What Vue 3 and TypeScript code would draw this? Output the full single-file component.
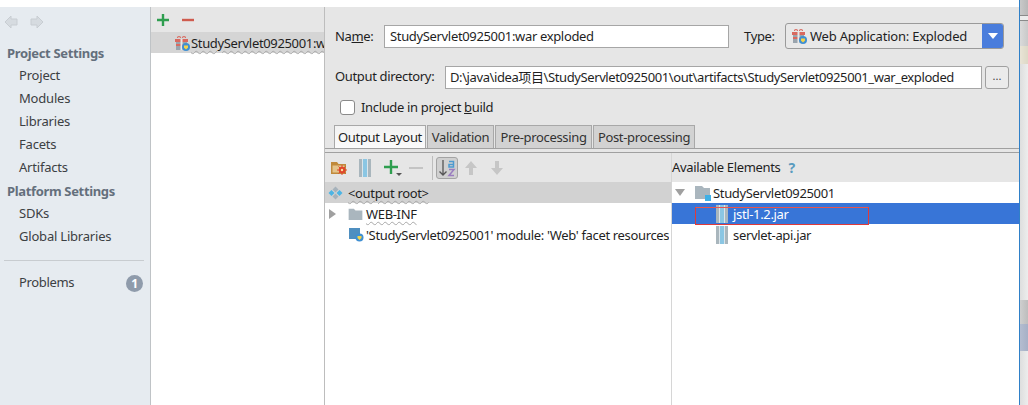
<template>
  <div class="window">
    <svg class="sprite" width="0" height="0">
      <defs>
        <symbol id="gift" viewBox="0 0 16 16">
          <path d="M3.500 3a1.500 1.500 0 1 1 3 0M8.500 3a1.500 1.500 0 1 1 3 0" fill="none" stroke="#d9695f" stroke-width="1.200" />
          <rect x="1" y="4" width="13" height="3" fill="#d9695f" />
          <rect x="2" y="7" width="11" height="8" fill="#9aa4ad" />
          <rect x="2" y="9" width="11" height="2" fill="#d9695f" />
          <rect x="6.500" y="4" width="2" height="11" fill="#e8e8e8" />
          <circle cx="12" cy="12" r="4" fill="#3f8fd2" />
          <path d="M10 10.500h4v2.200l-2 1.800-2-1.800z" fill="#f3d34a" />
        </symbol>
        <symbol id="jar" viewBox="0 0 12 18">
          <rect x="0" y="0" width="12" height="18" fill="#a9b6bd" />
          <rect x="3" y="0" width="6" height="18" fill="#dbe5ea" />
          <path d="M4 1h4M4 3h4M4 5h4M4 7h4M4 9h4M4 11h4M4 13h4M4 15h4M4 17h4" stroke="#3aa7dc" stroke-width="1" />
        </symbol>
        <symbol id="folder" viewBox="0 0 16 14">
          <path d="M0 1h6l2 2h8v11H0z" fill="#aab6be" />
        </symbol>
      </defs>
    </svg>

    <div class="top-gap"></div>
    <div class="main">
      <aside class="sidebar">
        <div class="nav-arrows">
          <svg width="14" height="14" viewBox="0 0 14 14"><path d="M1 7l6-6v3h6v6H7v3z" fill="#d6dbe0" stroke="#c8cdd2" /></svg>
          <svg width="14" height="14" viewBox="0 0 14 14"><path d="M13 7L7 1v3H1v6h6v3z" fill="#d6dbe0" stroke="#c8cdd2" /></svg>
        </div>
        <template v-for="group in navGroups" :key="group.title">
          <div class="nav-title">{{ group.title }}</div>
          <div v-for="item in group.items" :key="item" class="nav-item">{{ item }}</div>
        </template>
        <div class="nav-sep"></div>
        <div class="nav-item problems">
          <span class="problems-text">Problems</span>
          <span class="badge">1</span>
        </div>
      </aside>

      <section class="artifact-list">
        <div class="list-tools">
          <svg width="14" height="14" viewBox="0 0 14 14"><path d="M7 1v12M1 7h12" stroke="#2e9e4f" stroke-width="2.400" /></svg>
          <svg width="14" height="14" viewBox="0 0 14 14"><path d="M1 7h12" stroke="#cf5b4e" stroke-width="2.400" /></svg>
        </div>
        <div class="artifact-row">
          <svg class="gift" width="16" height="16"><use href="#gift" /></svg>
          <span class="wavy">StudyServlet0925001:war exploded</span>
        </div>
      </section>

      <section class="editor">
        <div class="name-row">
          <label class="name-label">Na<u>m</u>e:</label>
          <div class="field name-field">StudyServlet0925001:war exploded</div>
          <label class="type-label">Type:</label>
          <div class="combo">
            <svg width="16" height="16"><use href="#gift" /></svg>
            <span class="combo-text">Web Application: Exploded</span>
            <span class="combo-btn"><i></i></span>
          </div>
        </div>
        <div class="dir-row">
          <label class="dir-label">Output directory:</label>
          <div class="field dir-field">D:\java\idea项目\StudyServlet0925001\out\artifacts\StudyServlet0925001_war_exploded</div>
          <button class="browse">...</button>
        </div>
        <div class="check-row">
          <span class="checkbox"></span>
          <span class="check-text">Include in project <u>b</u>uild</span>
        </div>
        <div class="tabs">
          <div v-for="(tab, i) in tabs" :key="tab" class="tab" :class="{ active: i === 0 }">{{ tab }}</div>
        </div>
        <div class="tab-gap"></div>

        <div class="layout-pane">
          <div class="tree-col left-col">
            <div class="toolbar">
              <svg class="t-folder" width="16" height="15" viewBox="0 0 16 15">
                <path d="M0 2h6l1.500 2H15v10H0z" fill="#c08a3c" />
                <path d="M1.500 5.500h12v7h-12z" fill="#e4c48c" />
                <circle cx="11" cy="10" r="3.200" fill="#e0452c" />
                <path d="M11 5v10M6 10h10M7.500 6.500l7 7M14.500 6.500l-7 7" stroke="#e0452c" stroke-width="1" />
                <circle cx="11" cy="10" r="1.200" fill="#f6e2a0" />
              </svg>
              <svg class="t-jar" width="12" height="18"><use href="#jar" /></svg>
              <svg class="t-plus" width="18" height="20" viewBox="0 0 18 20">
                <path d="M7 2v14M0 9h14" stroke="#2e9e4f" stroke-width="2.400" />
                <path d="M12 15h6l-3 3z" fill="#555" />
              </svg>
              <svg class="t-minus" width="14" height="14" viewBox="0 0 14 14"><path d="M0 7h14" stroke="#c4c4c4" stroke-width="2" /></svg>
              <span class="t-sep"></span>
              <span class="sort-btn">
                <svg width="20" height="20" viewBox="0 0 20 20">
                  <path d="M6 2v15M2.500 13.500L6 17l3.500-3.500" fill="none" stroke="#555" stroke-width="1.300" />
                  <path d="M12 3.500h4.500v5.500H12V6.500h4.500" fill="none" stroke="#4d9ad0" stroke-width="1.500" />
                  <path d="M12 11.500h5l-5 6h5" fill="none" stroke="#9a7dc0" stroke-width="1.500" />
                </svg>
              </span>
              <svg class="t-up" width="12" height="14" viewBox="0 0 12 14"><path d="M6 0l6 7H8v7H4V7H0z" fill="#c6c6c6" /></svg>
              <svg class="t-down" width="12" height="14" viewBox="0 0 12 14"><path d="M6 14l6-7H8V0H4v7H0z" fill="#c6c6c6" /></svg>
            </div>
            <div class="tree">
              <div class="row root-row">
                <svg class="diamond" width="15" height="14" viewBox="0 0 15 14">
                  <path d="M3.500 4l3 3-3 3-3-3z" fill="#4db4e4" />
                  <path d="M7.500 0.500l3 3-3 3-3-3z" fill="#a6b2bb" />
                  <path d="M11.500 4l3 3-3 3-3-3z" fill="#4db4e4" />
                  <path d="M7.500 7.500l3 3-3 3-3-3z" fill="#a6b2bb" />
                </svg>
                <span class="wavy">&lt;output root&gt;</span>
              </div>
              <div class="row">
                <i class="tri-right"></i>
                <svg class="web-folder" width="15" height="12"><use href="#folder" /></svg>
                <span class="wavy">WEB-INF</span>
              </div>
              <div class="row">
                <svg class="module-icon" width="15" height="15" viewBox="0 0 15 15">
                  <rect x="0" y="1" width="11" height="11" fill="#4f8fc0" />
                  <circle cx="10.500" cy="10.500" r="4" fill="#3f8fd2" />
                  <path d="M8.500 9h4v2l-2 2-2-2z" fill="#f3d34a" />
                </svg>
                <span class="clip">'StudyServlet0925001' module: 'Web' facet resources</span>
              </div>
            </div>
          </div>

          <div class="tree-col right-col">
            <div class="toolbar avail">
              <span>Available Elements</span>
              <b class="help">?</b>
            </div>
            <div class="tree">
              <div class="row">
                <i class="tri-down"></i>
                <svg class="module-folder" width="16" height="16" viewBox="0 0 16 16">
                  <path d="M0 1h7l2 2h6v11H0z" fill="#aab6be" />
                  <rect x="10" y="10" width="6" height="6" fill="#3fb0e6" />
                </svg>
                <span>StudyServlet0925001</span>
              </div>
              <div class="row selected">
                <svg class="jar" width="12" height="18"><use href="#jar" /></svg>
                <span>jstl-1.2.jar</span>
                <div class="annotation"></div>
              </div>
              <div class="row">
                <svg class="jar" width="12" height="18"><use href="#jar" /></svg>
                <span>servlet-api.jar</span>
              </div>
            </div>
          </div>
        </div>
      </section>

      <div class="edge">
        <div v-for="seg in edgeSegments" :key="seg.top" class="edge-seg" :style="{ height: seg.h + 'px', background: seg.bg }"></div>
      </div>
    </div>
  </div>
</template>

<script setup lang="ts">
const navGroups = [
  { title: 'Project Settings', items: ['Project', 'Modules', 'Libraries', 'Facets', 'Artifacts'] },
  { title: 'Platform Settings', items: ['SDKs', 'Global Libraries'] },
]

const tabs = ['Output Layout', 'Validation', 'Pre-processing', 'Post-processing']

// background window peeking out behind the dialog, top to bottom
const edgeSegments = [
  { top: 0, h: 15, bg: 'linear-gradient(90deg,#c9c9c9,#b8b8b8)' },
  { top: 15, h: 1, bg: '#8a8a8a' },
  { top: 16, h: 4, bg: '#ececec' },
  { top: 20, h: 1, bg: '#8a8a8a' },
  { top: 21, h: 25, bg: 'linear-gradient(90deg,#dadada,#c9c9c9)' },
  { top: 46, h: 18, bg: 'linear-gradient(90deg,#e9e4d6,#ddd8c6)' },
  { top: 64, h: 236, bg: 'linear-gradient(90deg,#dedede,#ededed)' },
  { top: 300, h: 24, bg: 'linear-gradient(90deg,#cfcfcf,#bdbdbd)' },
  { top: 324, h: 27, bg: 'linear-gradient(90deg,#b4bdd0,#a6b0c6)' },
  { top: 351, h: 54, bg: 'linear-gradient(90deg,#dedede,#ededed)' },
]
</script>

<style>
html,
body {
  margin: 0;
  background: #fff;
}
</style>

<style scoped>
.window {
  width: 1028px;
  height: 405px;
  overflow: hidden;
  display: flex;
  flex-direction: column;
  font-family: "Noto Sans", "Noto Sans CJK SC", sans-serif;
  font-size: 13px;
  letter-spacing: -0.34px;
  color: #1f1f1f;
  background: #fff;
}

.sprite {
  position: absolute;
}

.top-gap {
  height: 7px;
  flex: none;
}

.main {
  flex: 1;
  display: flex;
  min-height: 0;
}

/* left nav */
.sidebar {
  width: 150px;
  flex: none;
  background: #e6ebf0;
  border-right: 1px solid #bfc3c6;
}

.nav-arrows {
  box-sizing: border-box;
  height: 35px;
  padding: 0 0 5px 4px;
  display: flex;
  align-items: center;
  gap: 12px;
}

.nav-title {
  height: 23px;
  line-height: 23px;
  padding-left: 7px;
  font-weight: 700;
  color: #646f7c;
}

.nav-item {
  height: 23px;
  line-height: 21px;
  padding-left: 19px;
  letter-spacing: -0.2px;
  color: #3c4043;
}

.nav-sep {
  height: 1px;
  margin: 11px 6px 11px 4px;
  background: #c8ccd0;
}

.problems {
  display: flex;
  align-items: center;
  justify-content: space-between;
  padding-right: 7px;
  letter-spacing: -0.34px;
}

.problems-text {
  padding-bottom: 2px;
}

.badge {
  width: 17px;
  height: 17px;
  border-radius: 50%;
  background: #8f9bab;
  color: #fff;
  font-size: 12px;
  font-weight: 700;
  line-height: 17px;
  text-align: center;
}

/* artifact list */
.artifact-list {
  width: 173px;
  flex: none;
  border-right: 1px solid #bdbdbd;
  overflow: hidden;
}

.list-tools {
  height: 25px;
  background: #e6e6e6;
  display: flex;
  align-items: center;
  gap: 11px;
  padding-left: 5px;
}

.artifact-row {
  height: 21px;
  background: #d5d5d5;
  display: flex;
  align-items: center;
  white-space: nowrap;
}

.gift {
  flex: none;
  margin: 0 1px 0 23px;
}

.wavy {
  text-decoration: underline wavy #a8a8a8 1px;
  text-underline-offset: 2px;
}

/* editor */
.editor {
  width: 694px;
  flex: none;
  display: flex;
  flex-direction: column;
  background: #e6e6e6;
  min-height: 0;
}

.name-row {
  display: flex;
  align-items: center;
  height: 26px;
  margin-top: 16px;
  padding-left: 10px;
}

.name-label {
  width: 49px;
  flex: none;
  padding-bottom: 1px;
}

.field {
  box-sizing: border-box;
  height: 23px;
  line-height: 20px;
  padding-left: 5px;
  background: #fff;
  border: 1px solid #a6a6a6;
  white-space: nowrap;
  overflow: hidden;
}

.name-field {
  width: 345px;
  flex: none;
}

.type-label {
  margin-left: 15px;
  width: 41px;
  flex: none;
  padding-bottom: 1px;
}

.combo {
  box-sizing: border-box;
  width: 219px;
  height: 26px;
  flex: none;
  display: flex;
  align-items: center;
  border: 1px solid #9a9a9a;
  border-radius: 3px;
  padding-left: 5px;
  background: #e8e8e8;
  overflow: hidden;
}

.combo-text {
  margin-left: 3px;
  padding-bottom: 1px;
  white-space: nowrap;
  letter-spacing: -0.22px;
}

.combo-btn {
  margin-left: auto;
  align-self: stretch;
  width: 21px;
  background: #4a7ddc;
  display: flex;
  align-items: center;
  justify-content: center;
}

.combo-btn i {
  width: 0;
  height: 0;
  border-left: 5px solid transparent;
  border-right: 5px solid transparent;
  border-top: 6px solid #fff;
}

.dir-row {
  display: flex;
  align-items: center;
  height: 23px;
  margin-top: 17px;
  padding-left: 10px;
}

.dir-label {
  width: 110px;
  flex: none;
  line-height: 21px;
  padding-bottom: 2px;
}

.dir-field {
  width: 537px;
  flex: none;
  padding-left: 4px;
  letter-spacing: -0.4px;
}

.browse {
  box-sizing: border-box;
  width: 24px;
  height: 23px;
  margin-left: 3px;
  padding: 0 0 4px;
  flex: none;
  border: 1px solid #a0a0a0;
  border-radius: 3px;
  background: #ebebeb;
  font-family: inherit;
  font-size: 11px;
  color: #444;
}

.check-row {
  display: flex;
  align-items: center;
  height: 15px;
  margin-top: 11px;
  padding-left: 15px;
}

.checkbox {
  box-sizing: border-box;
  width: 15px;
  height: 15px;
  border: 1px solid #8a8a8a;
  border-radius: 3px;
  background: #fff;
}

.check-text {
  margin-left: 6px;
  padding-bottom: 2px;
}

.tabs {
  display: flex;
  height: 23px;
  margin-top: 10px;
  padding-left: 9px;
  border-bottom: 1px solid #a0a0a0;
}

.tab {
  box-sizing: border-box;
  height: 23px;
  line-height: 22px;
  text-align: center;
  margin-right: 1px;
  background: #d2d2d2;
  border: 1px solid #a8a8a8;
  border-bottom: 0;
  color: #333;
  white-space: nowrap;
}

.tab:nth-child(1) { width: 92px; }
.tab:nth-child(2) { width: 67px; }
.tab:nth-child(3) { width: 97px; }
.tab:nth-child(4) { width: 102px; }

.tab.active {
  background: linear-gradient(#f2f2f2, #fbfbfb);
  color: #1f1f1f;
}

.tab-gap {
  height: 3px;
  border-bottom: 1px solid #a0a0a0;
}

.layout-pane {
  flex: 1;
  display: flex;
  min-height: 0;
}

.tree-col {
  display: flex;
  flex-direction: column;
  min-width: 0;
}

.left-col {
  width: 346px;
  flex: none;
  border-right: 1px solid #d6d6d6;
}

.right-col {
  flex: 1;
}

.toolbar {
  height: 29px;
  flex: none;
  display: flex;
  align-items: center;
  background: #e6e6e6;
}

.t-folder { margin-left: 6px; }
.t-jar { margin-left: 12px; }
.t-plus { margin-left: 13px; }
.t-minus { margin-left: 7px; }
.t-up { margin-left: 7px; }
.t-down { margin-left: 14px; }

.t-sep {
  width: 1px;
  height: 24px;
  margin-left: 9px;
  background: #bdbdbd;
}

.sort-btn {
  box-sizing: border-box;
  width: 22px;
  height: 22px;
  margin-left: 3px;
  display: flex;
  align-items: center;
  justify-content: center;
  border: 1px solid #a4a4a4;
  border-radius: 3px;
  background: #d0d0d0;
}

.avail span {
  padding-bottom: 1px;
}

.help {
  margin-left: 8px;
  color: #5a9bbf;
  font-size: 14px;
}

.tree {
  flex: 1;
  background: #fff;
}

.row {
  height: 21px;
  display: flex;
  align-items: center;
  position: relative;
  white-space: nowrap;
}

.root-row {
  background: #d2d2d2;
}

.diamond {
  margin: 0 5px 0 3px;
}

.tri-right {
  width: 0;
  height: 0;
  margin-left: 4px;
  border-top: 5px solid transparent;
  border-bottom: 5px solid transparent;
  border-left: 7px solid #a0a0a0;
}

.web-folder {
  margin: 0 3px 0 12px;
}

.module-icon {
  margin: 0 2px 0 24px;
  flex: none;
}

.clip {
  overflow: hidden;
}

.tri-down {
  width: 0;
  height: 0;
  margin-left: 3px;
  border-left: 5px solid transparent;
  border-right: 5px solid transparent;
  border-top: 7px solid #a0a0a0;
}

.module-folder {
  margin: 0 2px 0 10px;
}

.jar {
  margin: 0 5px 0 44px;
}

.selected {
  background: #3875d7;
  color: #fff;
}

.annotation {
  position: absolute;
  left: 23px;
  top: 4px;
  width: 172px;
  height: 16px;
  border: 1px solid #e03a3a;
  border-top-color: #e8544e;
}

/* screenshot edge: background app behind the dialog */
.edge {
  width: 8px;
  flex: none;
  border-left: 1px solid #2f80c8;
  margin-top: -7px;
}

.edge-seg {
  width: 100%;
}
</style>
